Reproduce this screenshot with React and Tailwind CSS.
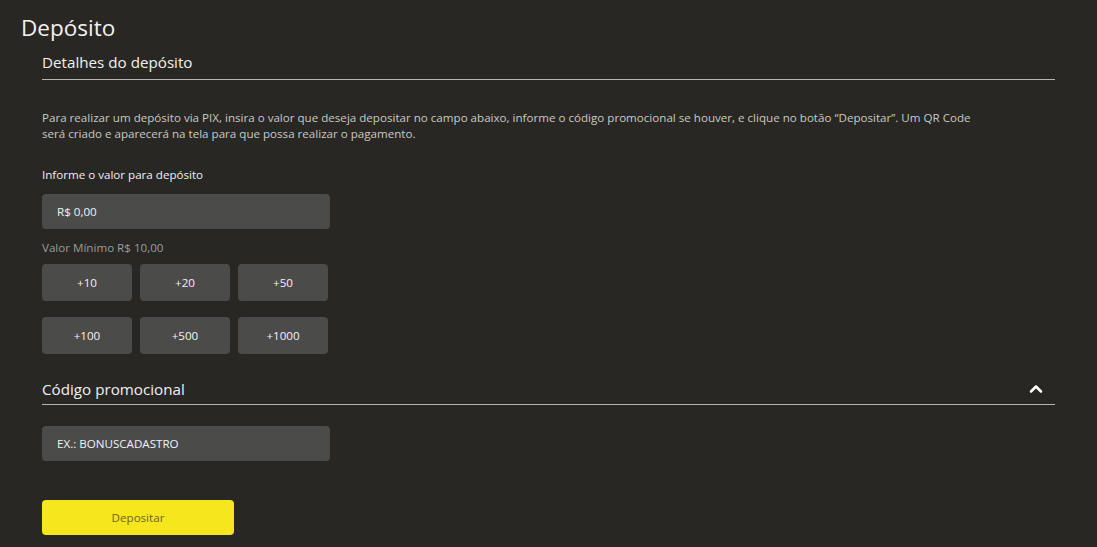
import { ChevronUp } from 'lucide-react';

const amounts = [['+10', '+20', '+50'], ['+100', '+500', '+1000']];

export default function App() {
  return (
    <div className="min-h-[547px] w-full bg-[#282723] text-white font-['Open_Sans',sans-serif]">
      <div className="pl-[21px] pt-[12px]">
        <h1 className="text-[22.5px] leading-[32px] text-[#f2f2f2]">Depósito</h1>
      </div>

      <div className="pl-[42px] pr-[42px]">
        <div className="mt-[6px] border-b border-[#b5b5ae] pb-[5px]">
          <h2 className="text-[15.2px] leading-[24px] text-[#f0f0f0]">Detalhes do depósito</h2>
        </div>

        <p className="mt-[30px] w-[945px] text-[11.6px] leading-[16px] text-[#c9c9c5]">
          Para realizar um depósito via PIX, insira o valor que deseja depositar no campo abaixo, informe o código promocional se houver, e clique no botão “Depositar”. Um QR Code será criado e aparecerá na tela para que possa realizar o pagamento.
        </p>

        <p className="mt-[25px] text-[11.6px] leading-[16px] text-[#f0f0f0]">Informe o valor para depósito</p>

        <div className="mt-[11px] flex h-[35px] w-[288px] items-center rounded-[4px] bg-[#4b4b4a] px-[15px] text-[11.6px] text-[#f2f2f2]">
          R$ 0,00
        </div>

        <p className="mt-[11px] text-[11.6px] leading-[16px] text-[#9c9c98]">Valor Mínimo R$ 10,00</p>

        <div className="mt-[8px] flex flex-col gap-[16px]">
          {amounts.map((row, i) => (
            <div key={i} className="flex gap-[8px]">
              {row.map((a) => (
                <button
                  key={a}
                  className="flex h-[37px] w-[90px] items-center justify-center rounded-[4px] bg-[#4b4b4a] text-[11.6px] text-[#f2f2f2]"
                >
                  {a}
                </button>
              ))}
            </div>
          ))}
        </div>

        <div className="mt-[23px] flex items-end justify-between border-b border-[#b5b5ae] pb-[3px]">
          <h2 className="text-[15.2px] leading-[24px] text-[#f0f0f0]">Código promocional</h2>
          <ChevronUp size={20} strokeWidth={3} className="mb-[2px] mr-[9px] text-white" />
        </div>

        <div className="mt-[21px] flex h-[35px] w-[288px] items-center rounded-[4px] bg-[#4b4b4a] px-[15px] text-[11.6px] text-[#f2f2f2]">
          EX.: BONUSCADASTRO
        </div>

        <button className="mt-[39px] flex h-[35px] w-[192px] items-center justify-center rounded-[4px] bg-[#f6e61e] text-[11.6px] text-[#6d6422]">
          Depositar
        </button>
      </div>
    </div>
  );
}
